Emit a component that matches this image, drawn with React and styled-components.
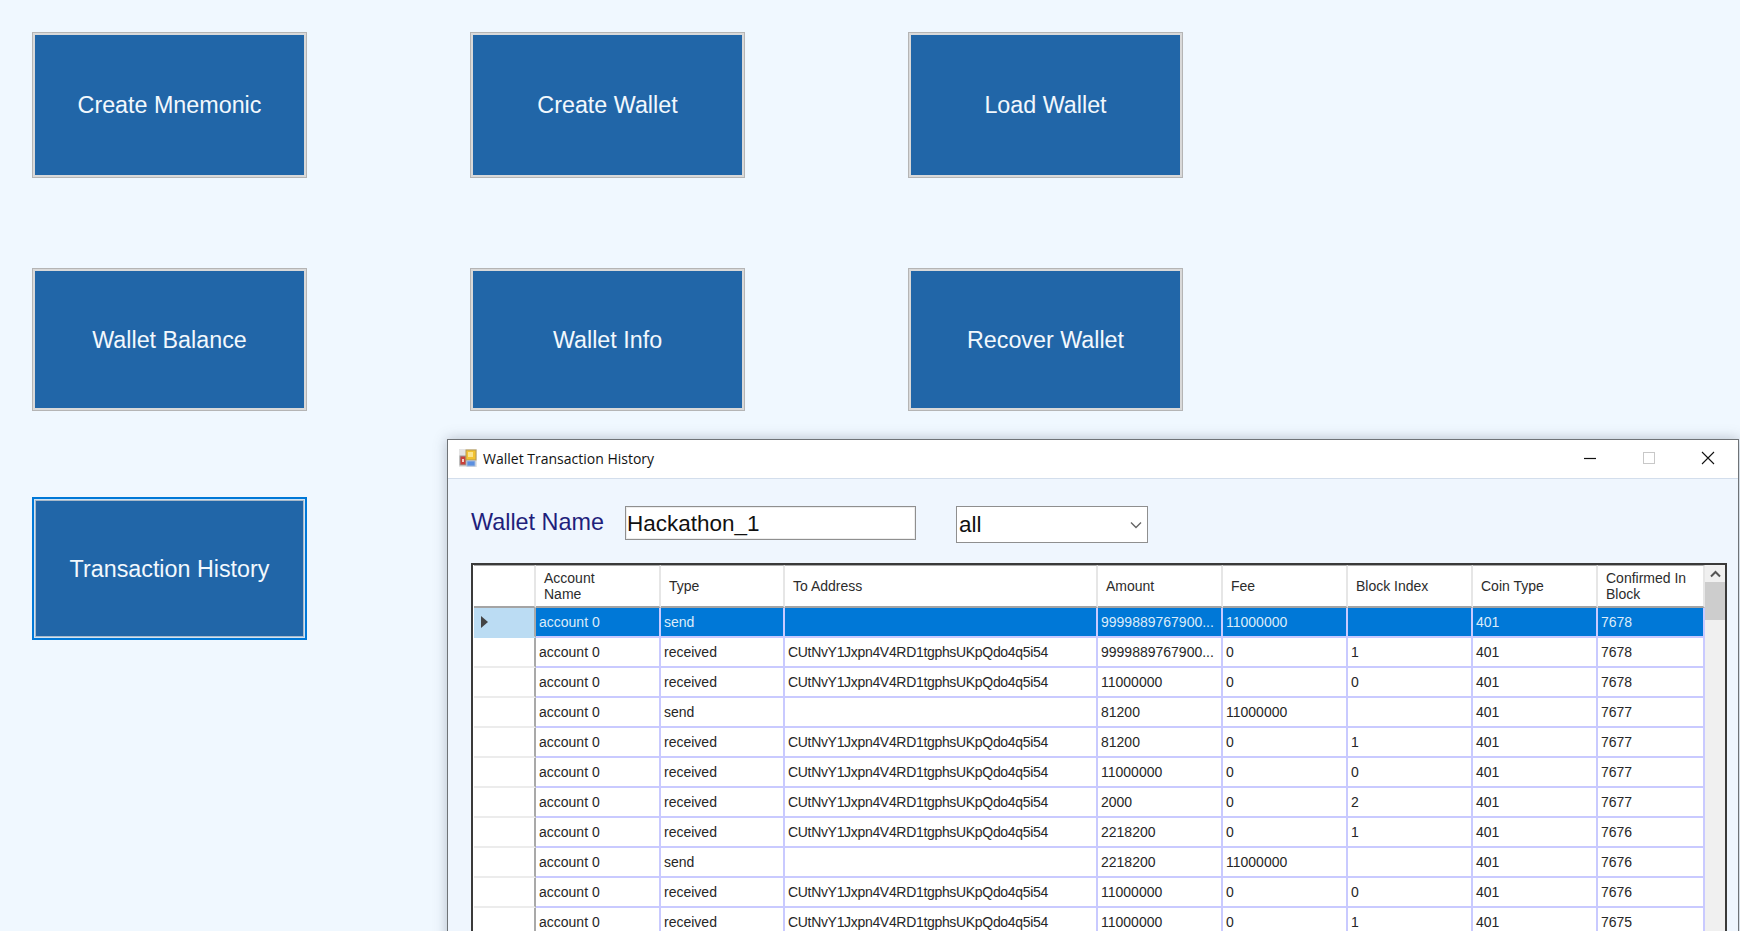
import React from 'react';
import styled, { createGlobalStyle } from 'styled-components';

const Global = createGlobalStyle`
html, body {
  margin: 0;
  padding: 0;
  height: 931px;
  overflow: hidden;
  background: #f0f8ff;
}
#root { height: 931px; }
* { box-sizing: border-box; }
`;

const Page = styled.div`
position: relative;
width: 1740px;
height: 931px;
overflow: hidden;
padding: 32px 0 0 32px;
font-family: "Liberation Sans", Arial, sans-serif;
`;

const Menu = styled.div`
display: grid;
grid-template-columns: 275px 275px 275px;
grid-template-rows: 236px 229px 143px;
column-gap: 163px;
align-items: start;
`;

const MenuButton = styled.button`
height: ${props => (props.tall ? '146px' : '143px')};
background: #2166a8;
color: #f2f8fd;
font-family: "Liberation Sans", Arial, sans-serif;
font-size: 23.3px;
padding: ${props => (props.tall ? '0' : '2px 0 0')};
border: 1px solid ${props => (props.focused ? '#0078d7' : '#b5b5b5')};
box-shadow: ${props => (props.focused
    ? 'inset 0 0 0 1px #0078d7, inset 0 0 0 2px #cfe4f6, inset 0 0 0 3px #a9b9c9'
    : 'inset 0 0 0 2px #d9d9d9')};
`;

const Window = styled.div`
position: absolute;
left: 447px;
top: 439px;
width: 1292px;
height: 560px;
background: #eff6fe;
border: 1px solid #6f7377;
box-shadow: 0 0 12px rgba(70, 80, 100, 0.35);
`;

const TitleBar = styled.div`
display: flex;
align-items: center;
height: 39px;
background: #fff;
border-bottom: 1px solid #d3deec;
padding: 0 1px 2px 11px;
`;

const TitleText = styled.span`
flex: 1;
margin-left: 6px;
font-family: "Open Sans", sans-serif;
font-size: 14px;
color: #111;
`;

const WinButton = styled.div`
display: flex;
align-items: center;
justify-content: center;
width: 59px;
height: 36px;
`;

const Body = styled.div`
padding: 27px 11px 0 23px;
`;

const FormRow = styled.div`
display: flex;
align-items: flex-start;
height: 57px;
`;

const FieldLabel = styled.label`
width: 154px;
font-size: 23.4px;
line-height: 32px;
color: #1f1f7c;
`;

const TextBox = styled.div`
width: 291px;
height: 34px;
margin-right: 40px;
background: #fff;
border: 1px solid #8f8f8f;
box-shadow: inset 0 0 0 1px #ededed;
padding-left: 1px;
font-size: 22.5px;
line-height: 34px;
color: #111;
`;

const SelectBox = styled.div`
display: flex;
align-items: center;
justify-content: space-between;
width: 192px;
height: 37px;
background: #fff;
border: 1px solid #8f8f8f;
padding: 0 5px 0 2px;
font-size: 22.5px;
color: #111;
`;

const GridFrame = styled.div`
display: flex;
width: 1256px;
border: 2px solid #3a3a3a;
border-bottom: 0;
background: #fff;
`;

const Table = styled.table`
width: 1231px;
table-layout: fixed;
border-collapse: separate;
border-spacing: 0;
font-size: 14px;
color: #262626;
margin-left: 1px;
`;

const Th = styled.th`
height: 43px;
padding: 0 6px 0 8px;
font-weight: 400;
text-align: left;
line-height: 16px;
color: #2c2c2c;
background: #fff;
border-top: 1px solid #a8a8a8;
border-right: 2px solid #e6e6e6;
border-bottom: 2px solid #a4a4a4;
`;

const Td = styled.td`
height: 30px;
padding: 0 3px;
white-space: nowrap;
overflow: hidden;
background: ${props => (props.selected ? '#0078d7' : '#fff')};
color: ${props => (props.selected ? '#dcecfa' : '#262626')};
border-right: 2px solid #c9caff;
border-bottom: 2px solid #c9caff;
`;

const AddressCell = styled(Td)`
letter-spacing: -0.32px;
`;

const RowHead = styled.td`
height: 30px;
padding: 0 0 0 7px;
background: ${props => (props.selected ? '#bbdcf3' : '#fff')};
border-right: 2px solid #a9a9a9;
border-bottom: 2px solid ${props => (props.selected ? '#bbdcf3' : '#ececec')};
`;

const Arrow = styled.div`
width: 0;
height: 0;
border-left: 7px solid #444;
border-top: 6px solid transparent;
border-bottom: 6px solid transparent;
`;

const ScrollBar = styled.div`
flex: 1;
display: flex;
flex-direction: column;
align-items: center;
background: #f0f0f0;
padding-top: 5px;
`;

const Thumb = styled.div`
width: 100%;
height: 38px;
margin-top: 4px;
background: #cdcdcd;
`;

const address = 'CUtNvY1Jxpn4V4RD1tgphsUKpQdo4q5i54';

const columns = [62, 125, 124, 313, 125, 125, 125, 125, 107];

const rows = [
  ['send', '', '9999889767900...', '11000000', '', '7678'],
  ['received', address, '9999889767900...', '0', '1', '7678'],
  ['received', address, '11000000', '0', '0', '7678'],
  ['send', '', '81200', '11000000', '', '7677'],
  ['received', address, '81200', '0', '1', '7677'],
  ['received', address, '11000000', '0', '0', '7677'],
  ['received', address, '2000', '0', '2', '7677'],
  ['received', address, '2218200', '0', '1', '7676'],
  ['send', '', '2218200', '11000000', '', '7676'],
  ['received', address, '11000000', '0', '0', '7676'],
  ['received', address, '11000000', '0', '1', '7675'],
];

const AppIcon = () => (
  <svg width="18" height="18" viewBox="0 0 18 18">
    <rect width="18" height="18" fill="#e4e4e4" />
    <rect x="1" y="7" width="6" height="9" fill="#c9403a" stroke="#999" />
    <rect x="3" y="10" width="2" height="3" fill="#f5d0c8" />
    <rect x="7" y="1" width="10" height="10" fill="#f2c230" stroke="#b79a50" />
    <rect x="9" y="3" width="5" height="5" fill="#fbe48c" />
    <rect x="8" y="12" width="8" height="5" fill="#5b8fe0" stroke="#9db6dc" />
  </svg>
);

const Minimize = () => (
  <svg width="14" height="14" viewBox="0 0 14 14">
    <path d="M1 7.5H13" stroke="#111" strokeWidth="1.2" />
  </svg>
);

const Maximize = () => (
  <svg width="14" height="14" viewBox="0 0 14 14">
    <rect x="1.5" y="1.5" width="11" height="11" fill="none" stroke="#c8c8c8" />
  </svg>
);

const Close = () => (
  <svg width="14" height="14" viewBox="0 0 14 14">
    <path d="M1 1L13 13M13 1L1 13" stroke="#111" strokeWidth="1.1" />
  </svg>
);

const Chevron = () => (
  <svg width="12" height="8" viewBox="0 0 12 8">
    <path d="M1 1.5L6 6.5L11 1.5" fill="none" stroke="#666" strokeWidth="1.4" />
  </svg>
);

const ScrollUp = () => (
  <svg width="11" height="8" viewBox="0 0 11 8">
    <path d="M1 6.5L5.5 2L10 6.5" fill="none" stroke="#555" strokeWidth="2" />
  </svg>
);

export default () => (
  <Page>
    <Global />
    <Menu>
      <MenuButton tall>Create Mnemonic</MenuButton>
      <MenuButton tall>Create Wallet</MenuButton>
      <MenuButton tall>Load Wallet</MenuButton>
      <MenuButton>Wallet Balance</MenuButton>
      <MenuButton>Wallet Info</MenuButton>
      <MenuButton>Recover Wallet</MenuButton>
      <MenuButton focused>Transaction History</MenuButton>
    </Menu>

    <Window>
      <TitleBar>
        <AppIcon />
        <TitleText>Wallet Transaction History</TitleText>
        <WinButton><Minimize /></WinButton>
        <WinButton><Maximize /></WinButton>
        <WinButton><Close /></WinButton>
      </TitleBar>

      <Body>
        <FormRow>
          <FieldLabel>Wallet Name</FieldLabel>
          <TextBox>Hackathon_1</TextBox>
          <SelectBox>all<Chevron /></SelectBox>
        </FormRow>

        <GridFrame>
          <Table>
            <colgroup>
              {columns.map((width, i) => <col key={i} width={width} />)}
            </colgroup>
            <thead>
              <tr>
                <Th />
                <Th>Account<br />Name</Th>
                <Th>Type</Th>
                <Th>To Address</Th>
                <Th>Amount</Th>
                <Th>Fee</Th>
                <Th>Block Index</Th>
                <Th>Coin Type</Th>
                <Th>Confirmed In<br />Block</Th>
              </tr>
            </thead>
            <tbody>
              {rows.map((row, i) => (
                <tr key={i}>
                  <RowHead selected={i === 0}>{i === 0 && <Arrow />}</RowHead>
                  <Td selected={i === 0}>account 0</Td>
                  <Td selected={i === 0}>{row[0]}</Td>
                  <AddressCell selected={i === 0}>{row[1]}</AddressCell>
                  <Td selected={i === 0}>{row[2]}</Td>
                  <Td selected={i === 0}>{row[3]}</Td>
                  <Td selected={i === 0}>{row[4]}</Td>
                  <Td selected={i === 0}>401</Td>
                  <Td selected={i === 0}>{row[5]}</Td>
                </tr>
              ))}
            </tbody>
          </Table>
          <ScrollBar>
            <ScrollUp />
            <Thumb />
          </ScrollBar>
        </GridFrame>
      </Body>
    </Window>
  </Page>
);
